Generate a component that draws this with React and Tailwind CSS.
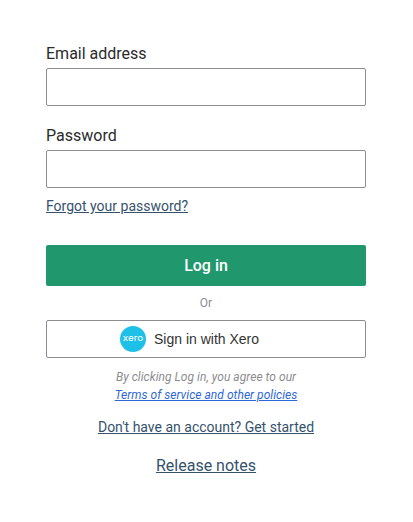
import React, { useState } from "react";

const XeroLogo = () => (
  <svg width="26" height="26" viewBox="0 0 26 26" aria-hidden="true">
    <circle cx="13" cy="13" r="13" fill="#1fc0e7" />
    <text
      x="2.8"
      y="15.4"
      textLength="20.4"
      lengthAdjust="spacingAndGlyphs"
      fill="#ffffff"
      className="font-['Inter',sans-serif] text-[8.5px] font-normal"
    >
      xero
    </text>
  </svg>
);

const Field = ({ id, label, type, value, onChange }) => (
  <div>
    <label htmlFor={id} className="block text-base leading-6 text-[#2b2b2b]">
      {label}
    </label>
    <input
      id={id}
      type={type}
      value={value}
      onChange={(e) => onChange(e.target.value)}
      className="mt-0.5 block h-[38px] w-full rounded-xs border border-[#8d8c92] bg-white px-3 text-base focus:outline-none"
    />
  </div>
);

const App = () => {
  const [email, setEmail] = useState("");
  const [password, setPassword] = useState("");

  return (
    <div className="min-h-screen bg-white pl-[46px] pt-[42px] font-['Roboto','Liberation_Sans',sans-serif]">
      <form onSubmit={(e) => e.preventDefault()} className="w-80">
        <Field
          id="email"
          label="Email address"
          type="email"
          value={email}
          onChange={setEmail}
        />
        <div className="mt-[18px]">
          <Field
            id="password"
            label="Password"
            type="password"
            value={password}
            onChange={setPassword}
          />
        </div>
        <a
          href="#forgot"
          className="mt-2 block w-fit text-sm leading-5 text-[#35526c] underline"
        >
          Forgot your password?
        </a>

        <button
          type="submit"
          className="mt-[29px] block h-[41px] w-full rounded-xs bg-[#20976c] text-base font-medium text-white"
        >
          Log in
        </button>
        <p className="mt-2 text-center text-xs leading-[18px] text-[#8d8c92]">
          Or
        </p>
        <button
          type="button"
          className="mt-2 flex h-[38px] w-full items-center gap-2 rounded-xs border border-[#8d8c92] bg-white pl-[73px] font-['Liberation_Sans',sans-serif] text-sm text-[#333333]"
        >
          <XeroLogo />
          <span>Sign in with Xero</span>
        </button>

        <p className="mt-2.5 text-center text-xs italic leading-[18px] tracking-[0.04px] text-[#8d8c92]">
          By clicking Log in, you agree to our
          <br />
          <a href="#terms" className="text-[#2d68d8] underline">
            Terms of service and other policies
          </a>
        </p>
      </form>

      <div className="mt-[13px] flex w-80 flex-col items-center text-[#35526c] underline">
        <a href="#signup" className="text-sm leading-5">
          Don't have an account? Get started
        </a>
        <a href="#releases" className="mt-[17px] text-base leading-6">
          Release notes
        </a>
      </div>
    </div>
  );
};

export default App;
